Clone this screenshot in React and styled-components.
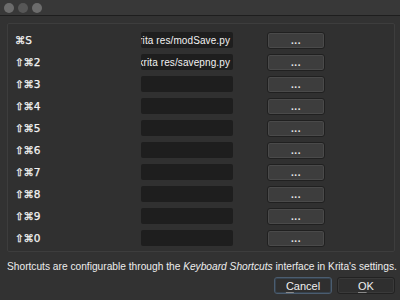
import React from 'react'
import styled, { createGlobalStyle } from 'styled-components'

const GlobalStyle = createGlobalStyle`
  html, body {
    margin: 0;
    padding: 0;
    background: #323232;
  }
  body {
    font-family: "Liberation Sans", "DejaVu Sans", sans-serif;
    color: #e6e6e6;
  }
`

const Window = styled.div`
  width: 400px;
  height: 300px;
  display: flex;
  flex-direction: column;
  background: #323232;
  overflow: hidden;
`

const TitleBar = styled.div`
  height: 15px;
  display: flex;
  align-items: center;
  gap: 4px;
  padding-left: 4px;
  background: #383838;
  border-bottom: 1px solid #1e1e1e;
`

const Light = styled.span`
  width: 10px;
  height: 10px;
  border-radius: 50%;
  background: ${({ dim }) => (dim ? '#575757' : '#6c6c6c')};
`

const Body = styled.div`
  flex: 1;
  display: flex;
  flex-direction: column;
  padding: 7px 5px 0 7px;
`

const Group = styled.div`
  height: 229px;
  box-sizing: border-box;
  border: 1px solid #3d3d3d;
  border-radius: 2px;
  background: #303030;
  display: flex;
  flex-direction: column;
  padding: 5px 0 0 7px;
`

const Row = styled.div`
  height: 22px;
  display: flex;
  align-items: center;
`

const Keys = styled.div`
  width: 126px;
  font-family: "DejaVu Sans", sans-serif;
  font-size: 10.5px;
  color: #f4f4f4;
  letter-spacing: -0.3px;
  -webkit-text-stroke: 0.25px #f4f4f4;
`

const Field = styled.div`
  width: 92px;
  height: 16px;
  box-sizing: border-box;
  background: #1e1e1e;
  border-radius: 2px;
  display: flex;
  justify-content: flex-end;
  align-items: center;
  overflow: hidden;
  white-space: nowrap;
  padding-right: 3px;
  font-size: 10px;
  letter-spacing: 0.1px;
  color: #f2f2f2;
`

const DotButton = styled.div`
  width: 58px;
  height: 17px;
  margin-left: 34px;
  box-sizing: border-box;
  border: 1px solid #202020;
  border-radius: 3px;
  background: #3d3d3d;
  box-shadow: inset 0 0 0 1px #4a4a4a;
  display: flex;
  justify-content: center;
  align-items: flex-end;
  padding-bottom: 3px;
  font-size: 10px;
  font-weight: bold;
  line-height: 8px;
  color: #e8e8e8;
  letter-spacing: 0.5px;
`

const Note = styled.div`
  margin-top: 9px;
  font-family: "Liberation Sans", sans-serif;
  font-size: 10.2px;
  color: #ededed;
  white-space: nowrap;
  em {
    font-style: italic;
  }
`

const Actions = styled.div`
  display: flex;
  justify-content: flex-end;
  gap: 5px;
  margin-top: 5px;
`

const Button = styled.div`
  width: 58px;
  height: 17px;
  box-sizing: border-box;
  border: 1px solid ${({ primary }) => (primary ? '#4b5d70' : '#222')};
  border-radius: 3px;
  background: #2f2f2f;
  box-shadow: inset 0 0 0 1px ${({ primary }) => (primary ? '#36424e' : '#3a3a3a')};
  display: flex;
  justify-content: center;
  align-items: center;
  font-size: 11px;
  color: #f0f0f0;
  u {
    text-decoration: underline;
    text-decoration-color: #8a8a8a;
    text-underline-offset: 2px;
  }
`

const rows = [
  { keys: '⌘S', path: 'krita res/modSave.py' },
  { keys: '⇧⌘2', path: 'krita res/savepng.py' },
  { keys: '⇧⌘3' },
  { keys: '⇧⌘4' },
  { keys: '⇧⌘5' },
  { keys: '⇧⌘6' },
  { keys: '⇧⌘7' },
  { keys: '⇧⌘8' },
  { keys: '⇧⌘9' },
  { keys: '⇧⌘0' },
]

const App = () => (
  <Window>
    <GlobalStyle />
    <TitleBar>
      <Light />
      <Light dim />
      <Light />
    </TitleBar>
    <Body>
      <Group>
        {rows.map(row => (
          <Row key={row.keys}>
            <Keys>{row.keys}</Keys>
            <Field>{row.path}</Field>
            <DotButton>...</DotButton>
          </Row>
        ))}
      </Group>
      <Note>
        Shortcuts are configurable through the <em>Keyboard Shortcuts</em> interface in Krita's settings.
      </Note>
      <Actions>
        <Button primary><span><u>C</u>ancel</span></Button>
        <Button><span><u>O</u>K</span></Button>
      </Actions>
    </Body>
  </Window>
)

export default App
